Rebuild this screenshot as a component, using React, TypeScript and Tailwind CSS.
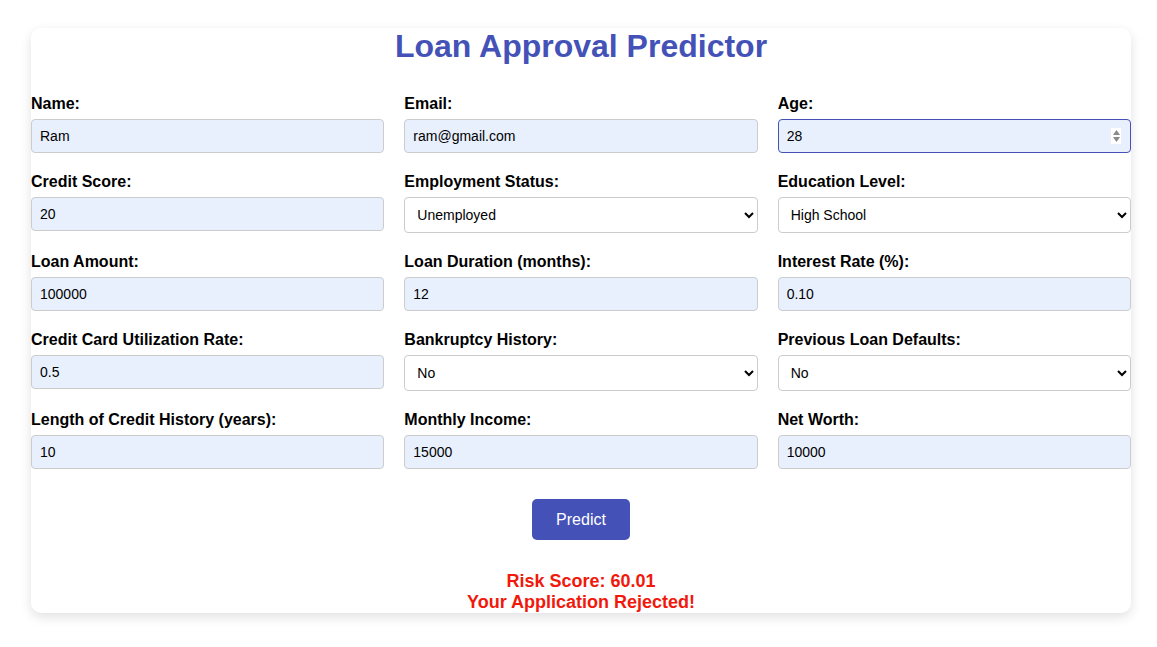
import { ReactNode } from 'react'

type Field =
  | { label: string; kind: 'input'; value: string; focused?: boolean }
  | { label: string; kind: 'select'; value: string; options: string[] }

const FIELDS: Field[] = [
  { label: 'Name:', kind: 'input', value: 'Ram' },
  { label: 'Email:', kind: 'input', value: 'ram@gmail.com' },
  { label: 'Age:', kind: 'input', value: '28', focused: true },
  { label: 'Credit Score:', kind: 'input', value: '20' },
  { label: 'Employment Status:', kind: 'select', value: 'Unemployed', options: ['Employed', 'Unemployed', 'Self-Employed'] },
  { label: 'Education Level:', kind: 'select', value: 'High School', options: ['High School', 'Bachelor', 'Master', 'Doctorate'] },
  { label: 'Loan Amount:', kind: 'input', value: '100000' },
  { label: 'Loan Duration (months):', kind: 'input', value: '12' },
  { label: 'Interest Rate (%):', kind: 'input', value: '0.10' },
  { label: 'Credit Card Utilization Rate:', kind: 'input', value: '0.5' },
  { label: 'Bankruptcy History:', kind: 'select', value: 'No', options: ['No', 'Yes'] },
  { label: 'Previous Loan Defaults:', kind: 'select', value: 'No', options: ['No', 'Yes'] },
  { label: 'Length of Credit History (years):', kind: 'input', value: '10' },
  { label: 'Monthly Income:', kind: 'input', value: '15000' },
  { label: 'Net Worth:', kind: 'input', value: '10000' },
]

function Spinner() {
  return (
    <span className="pointer-events-none absolute right-[10px] top-1/2 flex h-[16px] w-[10px] -translate-y-1/2 flex-col items-center justify-center gap-[2px] bg-white">
      <svg width="7" height="5" viewBox="0 0 7 5">
        <path d="M3.5 0 L7 5 L0 5 Z" fill="#8a8a8a" />
      </svg>
      <svg width="7" height="5" viewBox="0 0 7 5">
        <path d="M0 0 L7 0 L3.5 5 Z" fill="#8a8a8a" />
      </svg>
    </span>
  )
}

function Control({ field }: { field: Field }): ReactNode {
  if (field.kind === 'select') {
    return (
      <select
        defaultValue={field.value}
        className="h-[36px] w-full rounded-[4px] border border-[#cccccc] bg-white px-[8px] text-[14px] text-black"
        style={{ appearance: 'auto' }}
      >
        {field.options.map((o) => (
          <option key={o}>{o}</option>
        ))}
      </select>
    )
  }
  return (
    <div className="relative">
      <input
        type="text"
        defaultValue={field.value}
        className={
          'h-[34px] w-full rounded-[4px] border bg-[#e8f0fe] px-[8px] text-[14px] text-black outline-none ' +
          (field.focused ? 'border-[#4452b8]' : 'border-[#cccccc]')
        }
      />
      {field.focused && <Spinner />}
    </div>
  )
}

export default function App() {
  return (
    <div className="min-h-screen bg-white pt-[28px] font-['Liberation_Sans',Arial,sans-serif]">
      <div className="ml-[31px] w-[1100px] rounded-[10px] bg-white shadow-[0_4px_12px_rgba(0,0,0,0.12)]">
        <h1 className="mb-[30px] text-center text-[32px] font-bold leading-[37px] text-[#4452b8]">
          Loan Approval Predictor
        </h1>
        <form className="grid grid-cols-3 gap-x-[20px] gap-y-[20px]">
          {FIELDS.map((f) => (
            <div key={f.label}>
              <label className="mb-[6px] block text-[16px] font-bold leading-[18px] text-black">{f.label}</label>
              <Control field={f} />
            </div>
          ))}
        </form>
        <div className="mt-[30px] flex justify-center">
          <button
            type="button"
            className="h-[41px] w-[98px] rounded-[5px] bg-[#4452b8] text-[16px] text-white"
          >
            Predict
          </button>
        </div>
        <div className="mt-[31px] text-center text-[18px] font-bold leading-[21px] text-[#f0190c]">
          <p>Risk Score: 60.01</p>
          <p>Your Application Rejected!</p>
        </div>
      </div>
    </div>
  )
}
